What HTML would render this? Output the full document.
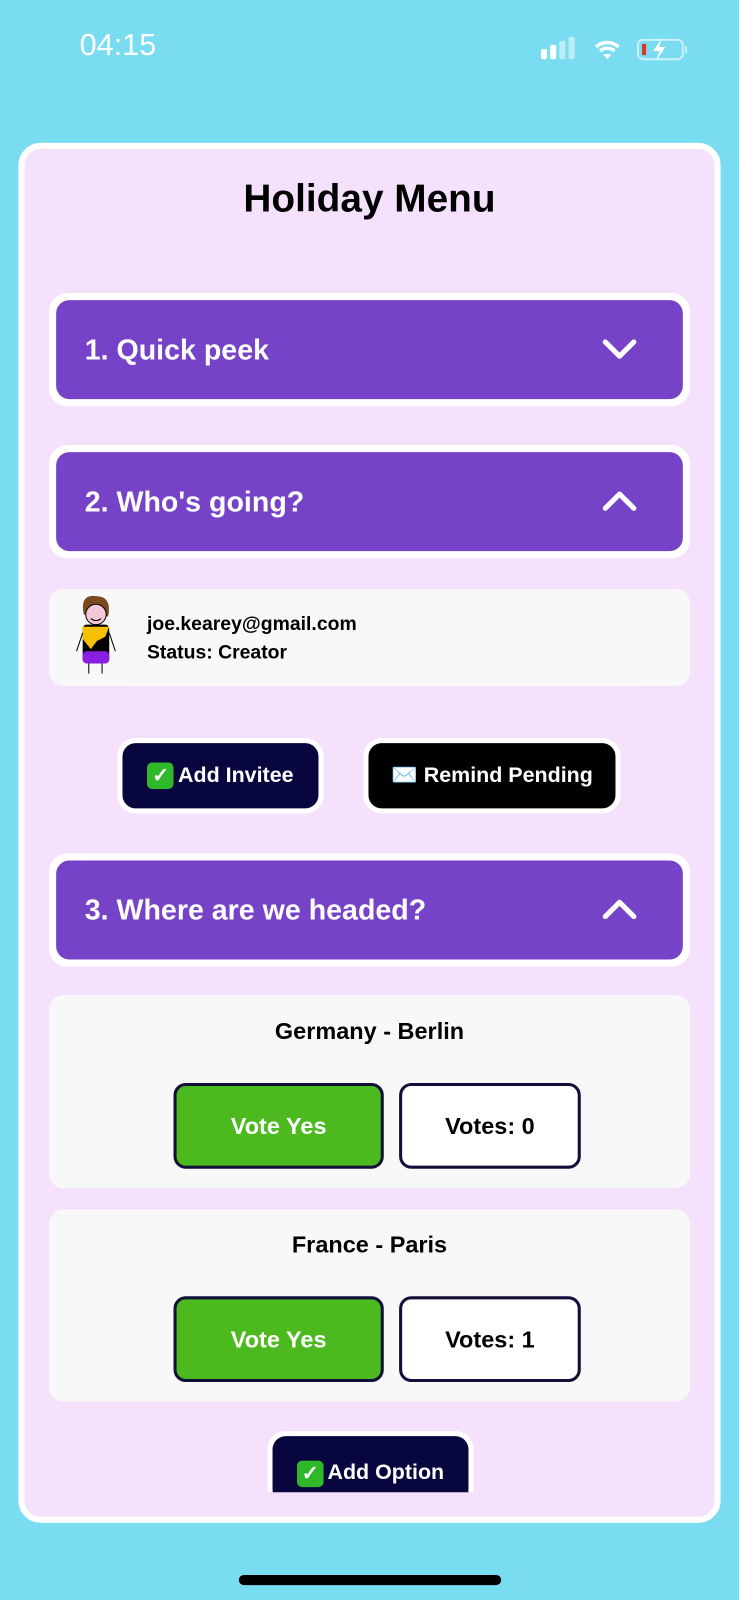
<!DOCTYPE html>
<html><head><meta charset="utf-8"><style>
html,body{margin:0;padding:0;width:739px;height:1600px;overflow:hidden;background:#7adcf0;}
#w{position:absolute;left:0;top:0;width:724px;height:1568px;transform:scale(1.0207);transform-origin:0 0;font-family:"Liberation Sans",sans-serif;font-weight:bold;}
.a{position:absolute;box-sizing:border-box;}
.time{left:78px;top:28px;color:#fff;font-size:30px;font-weight:normal;}
.card{left:18px;top:140px;width:688px;height:1352px;background:#f5e1fb;border:6px solid #fff;border-radius:22px;overflow:hidden;}
.title{left:0;width:724px;top:174px;text-align:center;font-size:38px;color:#000;}
.hdr{left:48px;width:628px;height:111px;background:#fff;border-radius:18px;}
.hdr .in{position:absolute;left:7px;top:7px;right:7px;bottom:7px;background:#7542c8;border-radius:13px;color:#fff;font-size:28px;padding-left:28px;line-height:97px;}
.hdr svg{position:absolute;right:52px;top:44px;}
.box{left:48px;width:628px;background:#f8f8f8;border-radius:14px;}
.btn{border:5px solid #fff;border-radius:18px;color:#fff;font-size:21px;display:flex;align-items:center;justify-content:center;}
.vy{background:#4cba1e;border:3px solid #10103a;border-radius:12px;color:#fff;font-size:23px;text-align:center;line-height:78px;}
.vc{background:#fff;border:3px solid #10103a;border-radius:12px;color:#000;font-size:23px;text-align:center;line-height:78px;}
.ot{left:48px;width:628px;text-align:center;font-size:23px;color:#000;}
.chk{display:inline-block;width:26px;height:26px;background:#2fb82a;border-radius:5px;color:#fff;font-size:20px;line-height:26px;text-align:center;margin-right:4px;}
</style></head><body><div id="w">
<div class="a time">04:15</div>
<svg class="a" style="left:528px;top:36px" width="150" height="26">
<rect x="2" y="12" width="6" height="10" rx="2" fill="#fff"/><rect x="11" y="8" width="6" height="14" rx="2" fill="#fff"/><rect x="20" y="4" width="6" height="18" rx="2" fill="#fff" opacity=".5"/><rect x="29" y="0" width="6" height="22" rx="2" fill="#fff" opacity=".5"/>
<path d="M56 10a16 16 0 0 1 22 0M60 14a10 10 0 0 1 14 0" stroke="#fff" stroke-width="3.5" fill="none"/><path d="M63 17l4 5 4-5z" fill="#fff"/>
<rect x="97" y="3" width="44" height="19" rx="5" fill="none" stroke="#fff" stroke-opacity=".6" stroke-width="2"/><rect x="101" y="7" width="4" height="11" fill="#e0332a"/><path d="M120 2l-8 12h6l-3 9 9-13h-6z" fill="#fff"/><rect x="143" y="9" width="2" height="7" fill="#fff" opacity=".6"/>
</svg>
<div class="a card"></div>
<div class="a title">Holiday Menu</div>
<div class="a hdr" style="top:287px"><div class="in">1. Quick peek</div><svg width="34" height="22"><path d="M3 4l14 14 14-14" stroke="#fff" stroke-width="5" fill="none" stroke-linecap="round" stroke-linejoin="round"/></svg></div>
<div class="a hdr" style="top:436px"><div class="in">2. Who's going?</div><svg width="34" height="22"><path d="M3 18l14-14 14 14" stroke="#fff" stroke-width="5" fill="none" stroke-linecap="round" stroke-linejoin="round"/></svg></div>
<div class="a box" style="top:577px;height:95px"></div>
<svg class="a" style="left:68px;top:580px" width="56" height="82">
<path d="M14 22Q10 2 26 4Q42 4 38 24" fill="#7a4a1c"/><ellipse cx="26" cy="22" rx="10" ry="10" fill="#f4c8d8" stroke="#000"/><path d="M21 26q5 4 10 0" stroke="#000" fill="none"/>
<rect x="13" y="32" width="26" height="38" rx="4" fill="#000"/><path d="M13 34h26l-4 10-8 4-6 8-8-10z" fill="#f5c000"/><rect x="13" y="58" width="26" height="12" rx="4" fill="#8a1ee0"/><path d="M19 70v10M32 70v10M13 40l-6 18M39 40l6 18" stroke="#000" fill="none"/></svg>
<div class="a" style="left:144px;top:598px;font-size:19px;line-height:28px;color:#000">joe.kearey@gmail.com<br>Status: Creator</div>
<div class="a btn" style="left:115px;top:723px;width:202px;height:74px;background:#08063f"><span class="chk">✓</span>Add Invitee</div>
<div class="a btn" style="left:356px;top:723px;width:252px;height:74px;background:#000">✉️&nbsp;Remind Pending</div>
<div class="a hdr" style="top:836px"><div class="in">3. Where are we headed?</div><svg width="34" height="22"><path d="M3 18l14-14 14 14" stroke="#fff" stroke-width="5" fill="none" stroke-linecap="round" stroke-linejoin="round"/></svg></div>
<div class="a box" style="top:975px;height:189px"></div>
<div class="a ot" style="top:997px">Germany - Berlin</div>
<div class="a vy" style="left:170px;top:1061px;width:206px;height:84px">Vote Yes</div>
<div class="a vc" style="left:391px;top:1061px;width:178px;height:84px">Votes: 0</div>
<div class="a box" style="top:1185px;height:188px"></div>
<div class="a ot" style="top:1206px">France - Paris</div>
<div class="a vy" style="left:170px;top:1270px;width:206px;height:84px">Vote Yes</div>
<div class="a vc" style="left:391px;top:1270px;width:178px;height:84px">Votes: 1</div>
<div class="a" style="left:18px;top:1380px;width:688px;height:82px;overflow:hidden">
<div class="a btn" style="left:244px;top:22px;width:202px;height:74px;background:#08063f;border-bottom:none;align-items:flex-start;padding-top:24px"><span class="chk">✓</span>Add Option</div></div>
<div class="a" style="left:234px;top:1543px;width:257px;height:10px;background:#000;border-radius:5px"></div>
</div></body></html>
